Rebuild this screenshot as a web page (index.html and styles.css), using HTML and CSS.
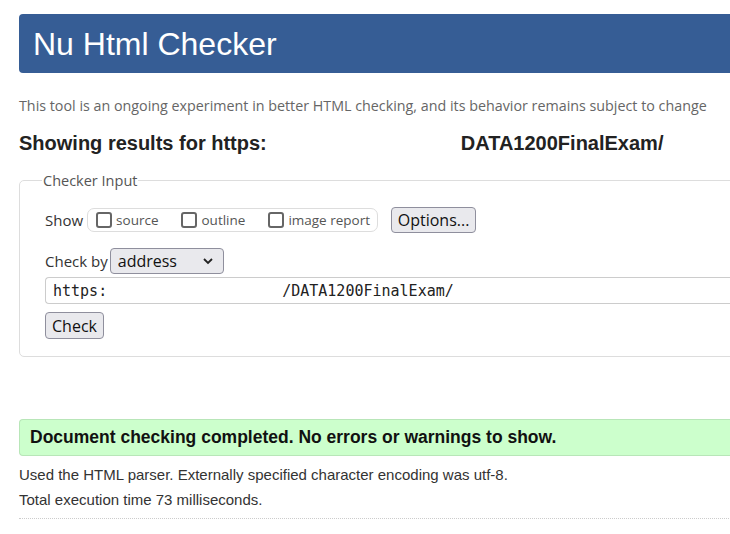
FILE: index.html
```html
<!DOCTYPE html>
<html lang="en">
<head>
<meta charset="utf-8">
<title>Nu Html Checker</title>
<link rel="stylesheet" href="styles.css">
</head>
<body>
<div class="page">
  <header class="banner"><h1 class="title">Nu Html Checker</h1></header>
  <p class="intro">This tool is an ongoing experiment in better HTML checking, and its behavior remains subject to change</p>
  <h2 class="results">Showing results for https:<span class="gap"></span>DATA1200FinalExam/</h2>
  <fieldset class="checker">
    <legend class="legend">Checker Input</legend>
    <div class="row show-row">
      <span class="label">Show</span>
      <span class="group">
        <span class="opt"><span class="box"></span>source</span>
        <span class="opt"><span class="box"></span>outline</span>
        <span class="opt"><span class="box"></span>image report</span>
      </span>
      <span class="btn options">Options...</span>
    </div>
    <div class="row by-row">
      <span class="label">Check by</span>
      <span class="select">address
        <svg class="chev" width="12" height="8" viewBox="0 0 12 8"><path d="M2 2 L6 6 L10 2" fill="none" stroke="#222" stroke-width="1.8"/></svg>
      </span>
    </div>
    <div class="url"><span>https:</span><span class="urlgap"></span><span>/DATA1200FinalExam/</span></div>
    <span class="btn check">Check</span>
  </fieldset>
  <div class="success">Document checking completed. No errors or warnings to show.</div>
  <p class="info">Used the HTML parser. Externally specified character encoding was utf-8.</p>
  <p class="info second">Total execution time 73 milliseconds.</p>
  <div class="rule"></div>
</div>
</body>
</html>
```
FILE: styles.css
```css
html, body {
  margin: 0;
  padding: 0;
  background: #fff;
  overflow: hidden;
}
.page {
  width: 760px;
  padding: 14px 0 0 19px;
  font-family: "Liberation Sans", Arial, sans-serif;
  color: #222;
}
.banner {
  height: 59px;
  background: #365d95;
  border-radius: 4px 0 0 4px;
  display: flex;
  align-items: center;
  padding-left: 14px;
}
.title {
  margin: 0;
  font-weight: normal;
  font-size: 32px;
  color: #fff;
  line-height: 1;
  padding-top: 1px;
}
.intro {
  margin: 24px 0 0 0;
  font-family: "Open Sans", "Noto Sans", sans-serif;
  font-size: 14.3px;
  line-height: 18px;
  color: #666;
}
.results {
  margin: 16px 0 0 0;
  font-size: 20px;
  line-height: 24px;
  font-weight: bold;
  color: #222;
  display: flex;
}
.gap { width: 194px; }
.checker {
  margin: 16px 0 0 0;
  padding: 15px 0 17px 25px;
  border: 1px solid #ddd;
  border-radius: 5px;
  font-family: "Open Sans", "Noto Sans", sans-serif;
  font-size: 14px;
}
.legend {
  margin-left: -3px;
  padding: 0 1px;
  font-size: 14.5px;
  color: #555;
}
.row {
  display: flex;
  align-items: center;
}
.label {
  color: #333;
  font-size: 15px;
  white-space: nowrap;
}
.show-row { height: 30px; }
.group {
  margin-left: 4px;
  height: 24px;
  width: 291px;
  flex: none;
  border: 1px solid #ddd;
  border-radius: 7px;
  display: flex;
  align-items: center;
  padding-left: 8px;
  gap: 23px;
  box-sizing: border-box;
  color: #555;
  font-size: 13.5px;
  white-space: nowrap;
}
.opt {
  display: flex;
  align-items: center;
  gap: 4px;
  flex: none;
}
.box {
  width: 16px;
  height: 16px;
  border: 2px solid #666;
  border-radius: 3px;
  box-sizing: border-box;
}
.btn {
  display: inline-flex;
  align-items: center;
  justify-content: center;
  background: #e9e9ed;
  border: 1px solid #8f8f9d;
  border-radius: 4px;
  box-sizing: border-box;
  color: #111;
  font-family: "Open Sans", "Noto Sans", sans-serif;
  font-size: 16px;
}
.options {
  margin-left: 13px;
  width: 85px;
  height: 26px;
}
.by-row {
  margin-top: 13px;
  height: 26px;
}
.select {
  margin-left: 2px;
  width: 114px;
  height: 26px;
  box-sizing: border-box;
  background: #e9e9ed;
  border: 1px solid #8f8f9d;
  border-radius: 4px;
  display: flex;
  align-items: center;
  justify-content: space-between;
  padding: 0 9px 0 7px;
  font-size: 16px;
  color: #111;
}
.url {
  margin-top: 3px;
  height: 27px;
  border: 1px solid #ccc;
  border-right: none;
  border-radius: 4px 0 0 4px;
  box-sizing: border-box;
  display: flex;
  align-items: center;
  padding-left: 7px;
  font-family: "DejaVu Sans Mono", monospace;
  font-size: 15px;
  color: #222;
}
.urlgap { width: 175px; }
.check {
  margin-top: 8px;
  width: 59px;
  height: 27px;
}
.success {
  margin-top: 62px;
  height: 37px;
  box-sizing: border-box;
  background: #ccffcc;
  border: 1px solid #b8e6b8;
  border-right: none;
  border-radius: 4px 0 0 4px;
  display: flex;
  align-items: center;
  padding-left: 10px;
  font-weight: bold;
  font-size: 17.5px;
  color: #111;
}
.info {
  margin: 10px 0 0 0;
  font-size: 15px;
  line-height: 18px;
  color: #333;
}
.second { margin-top: 7px; }
.rule {
  margin-top: 9px;
  border-top: 1px dotted #ccc;
}
```
